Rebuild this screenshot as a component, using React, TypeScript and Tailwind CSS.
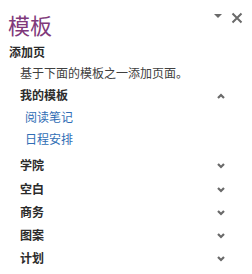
import React from "react";

const font = { fontFamily: '"Noto Sans", "Noto Sans CJK SC", sans-serif' };

function Chevron({ up = false }: { up?: boolean }) {
  return (
    <svg width="8" height="6" viewBox="0 0 8 6" className="shrink-0">
      <path
        d={up ? "M1 5 L4 2 L7 5" : "M1 1 L4 4 L7 1"}
        fill="none"
        stroke="#6a6a6a"
        strokeWidth="2.2"
      />
    </svg>
  );
}

function Section({ label, h, up = false }: { label: string; h: string; up?: boolean }) {
  return (
    <div className={`flex items-center justify-between pl-[20px] pr-[27px] ${h}`}>
      <span className="text-[12px] font-bold text-[#2b2b2b] leading-none">{label}</span>
      <Chevron up={up} />
    </div>
  );
}

export default function App() {
  return (
    <div className="w-[252px] h-[274px] bg-white overflow-hidden" style={font}>
      <div className="flex items-start pt-[10px] pl-[8px]">
        <div className="h-[30px] flex items-center text-[22px] leading-none text-[#80397b]">模板</div>
        <div className="ml-auto flex items-start pr-[9px]">
          <svg width="8" height="5" viewBox="0 0 8 5" className="mt-[4px]">
            <path d="M0 0 L8 0 L4 4 Z" fill="#6a6a6a" />
          </svg>
          <svg width="12" height="12" viewBox="0 0 12 12" className="ml-[9px] mt-[2px]">
            <path d="M1.5 1.5 L10.5 10.5 M10.5 1.5 L1.5 10.5" stroke="#6a6a6a" strokeWidth="2" />
          </svg>
        </div>
      </div>
      <div className="mt-[3px] h-[20px] flex items-center pl-[9px] text-[12px] font-bold text-[#2b2b2b] leading-none">添加页</div>
      <div className="h-[21px] flex items-center pl-[20px] text-[12px] text-[#404040] leading-none">基于下面的模板之一添加页面。</div>
      <Section label="我的模板" h="h-[23px]" up />
      <div className="h-[21px] flex items-center pl-[25px] text-[12px] text-[#2f6db5] leading-none">阅读笔记</div>
      <div className="h-[24px] flex items-center pl-[25px] text-[12px] text-[#2f6db5] leading-none">日程安排</div>
      <div className="h-[2px]" />
      <Section label="学院" h="h-[24px]" />
      <Section label="空白" h="h-[23px]" />
      <Section label="商务" h="h-[23px]" />
      <Section label="图案" h="h-[23px]" />
      <Section label="计划" h="h-[23px]" />
    </div>
  );
}
